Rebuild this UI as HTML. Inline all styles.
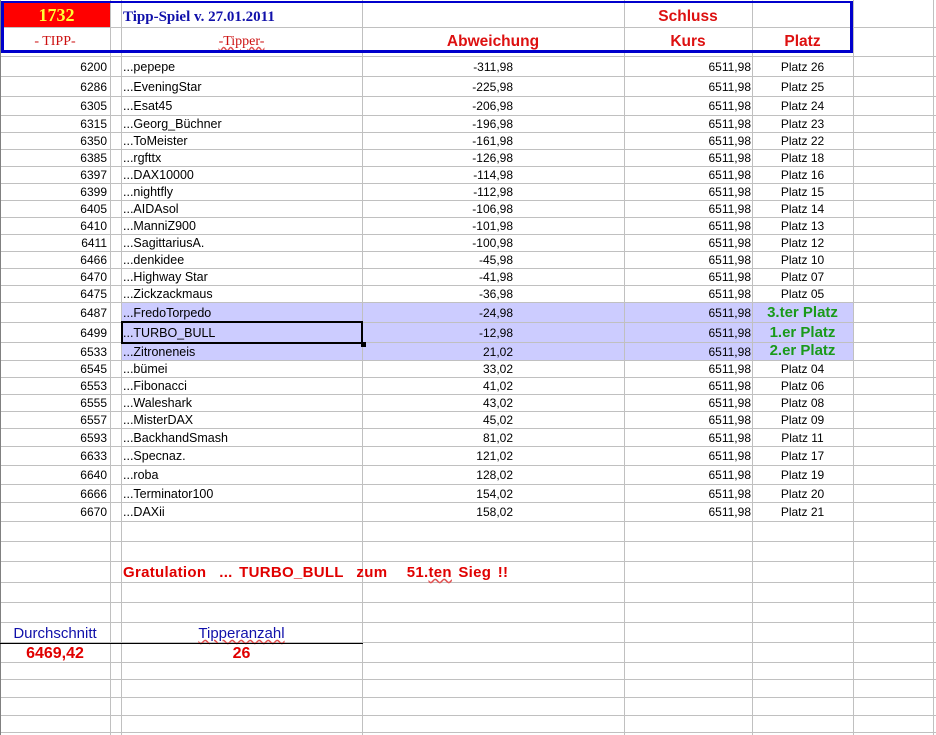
<!DOCTYPE html>
<html><head><meta charset="utf-8"><style>
body{margin:0;width:936px;height:735px;background:#fff;position:relative;overflow:hidden;font-family:"Liberation Sans",Arial,sans-serif;font-size:12px;color:#000}
.v{position:absolute;top:0;height:735px;width:1px;background:#c0c0c0;z-index:2}
.r{position:absolute;left:0;width:936px;border-bottom:1px solid #c0c0c0;box-sizing:border-box}
.r span{position:absolute;top:0;white-space:nowrap}
.a{left:0;width:107px;text-align:right}
.b{left:123px;font-size:12.5px}
.c{left:362px;width:151px;text-align:right}
.d{left:624px;width:127px;text-align:right}
.e{left:752px;width:101px;text-align:center}
.g{color:#1a9a1a;font-weight:bold;font-size:15px}
.hl{background:linear-gradient(90deg,#fff 121px,#ccccff 121px,#ccccff 853px,#fff 853px)}
.h{position:absolute;color:#dd1010;font:bold 15.5px 'Liberation Sans',sans-serif;line-height:26px;text-align:center;z-index:3}
</style></head><body>

<div class="r" style="top:0;height:28px"></div>
<div class="r" style="top:28px;height:29px"></div>

<div class="r" style="top:57px;height:20px;line-height:20px"><span class="a">6200</span><span class="b">...pepepe</span><span class="c">-311,98</span><span class="d">6511,98</span><span class="e">Platz 26</span></div>
<div class="r" style="top:77px;height:20px;line-height:20px"><span class="a">6286</span><span class="b">...EveningStar</span><span class="c">-225,98</span><span class="d">6511,98</span><span class="e">Platz 25</span></div>
<div class="r" style="top:97px;height:19px;line-height:19px"><span class="a">6305</span><span class="b">...Esat45</span><span class="c">-206,98</span><span class="d">6511,98</span><span class="e">Platz 24</span></div>
<div class="r" style="top:116px;height:17px;line-height:17px"><span class="a">6315</span><span class="b">...Georg_Büchner</span><span class="c">-196,98</span><span class="d">6511,98</span><span class="e">Platz 23</span></div>
<div class="r" style="top:133px;height:17px;line-height:17px"><span class="a">6350</span><span class="b">...ToMeister</span><span class="c">-161,98</span><span class="d">6511,98</span><span class="e">Platz 22</span></div>
<div class="r" style="top:150px;height:17px;line-height:17px"><span class="a">6385</span><span class="b">...rgfttx</span><span class="c">-126,98</span><span class="d">6511,98</span><span class="e">Platz 18</span></div>
<div class="r" style="top:167px;height:17px;line-height:17px"><span class="a">6397</span><span class="b">...DAX10000</span><span class="c">-114,98</span><span class="d">6511,98</span><span class="e">Platz 16</span></div>
<div class="r" style="top:184px;height:17px;line-height:17px"><span class="a">6399</span><span class="b">...nightfly</span><span class="c">-112,98</span><span class="d">6511,98</span><span class="e">Platz 15</span></div>
<div class="r" style="top:201px;height:17px;line-height:17px"><span class="a">6405</span><span class="b">...AIDAsol</span><span class="c">-106,98</span><span class="d">6511,98</span><span class="e">Platz 14</span></div>
<div class="r" style="top:218px;height:17px;line-height:17px"><span class="a">6410</span><span class="b">...ManniZ900</span><span class="c">-101,98</span><span class="d">6511,98</span><span class="e">Platz 13</span></div>
<div class="r" style="top:235px;height:17px;line-height:17px"><span class="a">6411</span><span class="b">...SagittariusA.</span><span class="c">-100,98</span><span class="d">6511,98</span><span class="e">Platz 12</span></div>
<div class="r" style="top:252px;height:17px;line-height:17px"><span class="a">6466</span><span class="b">...denkidee</span><span class="c">-45,98</span><span class="d">6511,98</span><span class="e">Platz 10</span></div>
<div class="r" style="top:269px;height:17px;line-height:17px"><span class="a">6470</span><span class="b">...Highway Star</span><span class="c">-41,98</span><span class="d">6511,98</span><span class="e">Platz 07</span></div>
<div class="r" style="top:286px;height:17px;line-height:17px"><span class="a">6475</span><span class="b">...Zickzackmaus</span><span class="c">-36,98</span><span class="d">6511,98</span><span class="e">Platz 05</span></div>
<div class="r hl" style="top:303px;height:20px;line-height:20px"><span class="a">6487</span><span class="b">...FredoTorpedo</span><span class="c">-24,98</span><span class="d">6511,98</span><span class="e g" style="line-height:19px">3.ter Platz</span></div>
<div class="r hl" style="top:323px;height:20px;line-height:20px"><span class="a">6499</span><span class="b">...TURBO_BULL</span><span class="c">-12,98</span><span class="d">6511,98</span><span class="e g" style="line-height:19px">1.er Platz</span></div>
<div class="r hl" style="top:343px;height:18px;line-height:18px"><span class="a">6533</span><span class="b">...Zitroneneis</span><span class="c">21,02</span><span class="d">6511,98</span><span class="e g" style="line-height:16px">2.er Platz</span></div>
<div class="r" style="top:361px;height:17px;line-height:17px"><span class="a">6545</span><span class="b">...bümei</span><span class="c">33,02</span><span class="d">6511,98</span><span class="e">Platz 04</span></div>
<div class="r" style="top:378px;height:17px;line-height:17px"><span class="a">6553</span><span class="b">...Fibonacci</span><span class="c">41,02</span><span class="d">6511,98</span><span class="e">Platz 06</span></div>
<div class="r" style="top:395px;height:17px;line-height:17px"><span class="a">6555</span><span class="b">...Waleshark</span><span class="c">43,02</span><span class="d">6511,98</span><span class="e">Platz 08</span></div>
<div class="r" style="top:412px;height:17px;line-height:17px"><span class="a">6557</span><span class="b">...MisterDAX</span><span class="c">45,02</span><span class="d">6511,98</span><span class="e">Platz 09</span></div>
<div class="r" style="top:429px;height:18px;line-height:18px"><span class="a">6593</span><span class="b">...BackhandSmash</span><span class="c">81,02</span><span class="d">6511,98</span><span class="e">Platz 11</span></div>
<div class="r" style="top:447px;height:19px;line-height:19px"><span class="a">6633</span><span class="b">...Specnaz.</span><span class="c">121,02</span><span class="d">6511,98</span><span class="e">Platz 17</span></div>
<div class="r" style="top:466px;height:19px;line-height:19px"><span class="a">6640</span><span class="b">...roba</span><span class="c">128,02</span><span class="d">6511,98</span><span class="e">Platz 19</span></div>
<div class="r" style="top:485px;height:18px;line-height:18px"><span class="a">6666</span><span class="b">...Terminator100</span><span class="c">154,02</span><span class="d">6511,98</span><span class="e">Platz 20</span></div>
<div class="r" style="top:503px;height:19px;line-height:19px"><span class="a">6670</span><span class="b">...DAXii</span><span class="c">158,02</span><span class="d">6511,98</span><span class="e">Platz 21</span></div>
<div class="r" style="top:522px;height:20px"></div>
<div class="r" style="top:542px;height:20px"></div>
<div class="r" style="top:562px;height:21px"></div>
<div class="r" style="top:583px;height:20px"></div>
<div class="r" style="top:603px;height:20px"></div>
<div class="r" style="top:623px;height:20px"></div>
<div class="r" style="top:643px;height:20px"></div>
<div class="r" style="top:663px;height:17px"></div>
<div class="r" style="top:680px;height:18px"></div>
<div class="r" style="top:698px;height:18px"></div>
<div class="r" style="top:716px;height:17px"></div>

<div class="v" style="left:0;background:#808080"></div>
<div class="v" style="left:110px"></div>
<div class="v" style="left:121px"></div>
<div class="v" style="left:362px"></div>
<div class="v" style="left:624px"></div>
<div class="v" style="left:752px"></div>
<div class="v" style="left:853px"></div>
<div class="v" style="left:933px"></div>

<div style="position:absolute;z-index:3;left:3px;top:3px;width:107px;height:24px;background:#ff0000;color:#ffff33;font:bold 18px 'Liberation Serif',serif;text-align:center;line-height:25px">1732</div>
<div style="position:absolute;z-index:3;left:123px;top:2px;color:#1010aa;font:bold 15px 'Liberation Serif',serif;line-height:30px">Tipp-Spiel v. 27.01.2011</div>
<div style="position:absolute;z-index:3;left:0;top:29px;width:110px;text-align:center;color:#cc1010;font:14px 'Liberation Serif',serif;line-height:26px">- TIPP-</div>
<div style="position:absolute;z-index:3;left:121px;top:29px;width:241px;text-align:center;color:#cc1010;font:14px 'Liberation Serif',serif;line-height:26px;text-decoration:underline wavy #e05050">-Tipper-</div>
<div class="h" style="left:362px;top:29px;width:262px">Abweichung</div>
<div class="h" style="left:624px;top:4px;width:128px">Schluss</div>
<div class="h" style="left:624px;top:29px;width:128px">Kurs</div>
<div class="h" style="left:752px;top:29px;width:101px">Platz</div>
<div style="position:absolute;z-index:4;left:1px;top:1px;width:852px;height:52px;box-sizing:border-box;border:3px solid #0000cc;border-top-width:2px"></div>

<div style="position:absolute;z-index:4;left:121px;top:321px;width:242px;height:23px;box-sizing:border-box;border:2px solid #000"></div>
<div style="position:absolute;z-index:4;left:361px;top:342px;width:5px;height:5px;background:#000"></div>

<div style="position:absolute;z-index:3;left:123px;top:562px;line-height:22px;white-space:nowrap;color:#e00000;font-weight:bold;font-size:15px;word-spacing:2px;letter-spacing:0.3px">Gratulation &nbsp;... TURBO_BULL &nbsp;zum &nbsp; 51.<span style="text-decoration:underline wavy #e05050">ten</span> Sieg !!</div>
<div style="position:absolute;z-index:3;left:0;top:623px;width:110px;text-align:center;color:#1010aa;font-size:15px;line-height:22px">Durchschnitt</div>
<div style="position:absolute;z-index:3;left:121px;top:623px;width:241px;text-align:center;color:#1010aa;font-size:15px;line-height:22px"><span style="text-decoration:underline wavy #e05050">Tipperanzahl</span></div>
<div style="position:absolute;z-index:4;left:0;top:643px;width:363px;height:1px;background:#000"></div>
<div style="position:absolute;z-index:3;left:0;top:643px;width:110px;text-align:center;color:#e00000;font-weight:bold;font-size:16px;line-height:21px">6469,42</div>
<div style="position:absolute;z-index:3;left:121px;top:643px;width:241px;text-align:center;color:#e00000;font-weight:bold;font-size:16px;line-height:21px">26</div>
</body></html>
